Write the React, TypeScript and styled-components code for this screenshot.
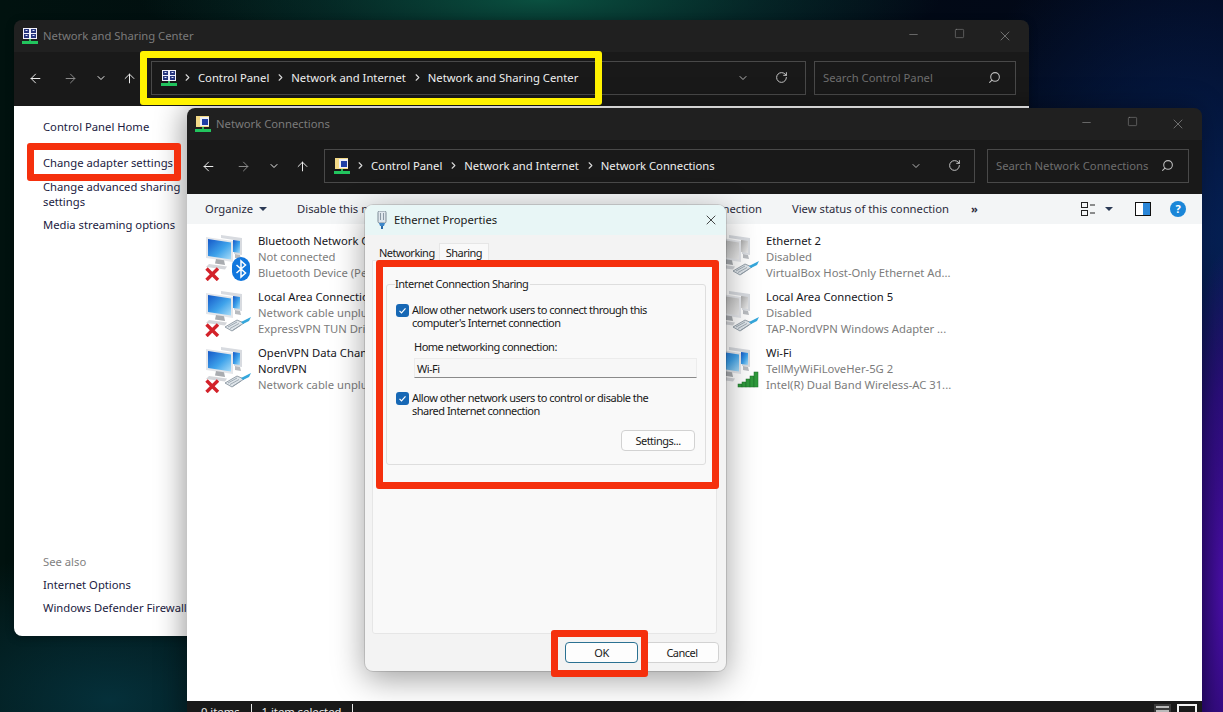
import { ArrowLeft, ArrowRight, ArrowUp, ChevronDown, ChevronRight, Minus, RotateCw, Search, Square, X } from 'lucide-react'
import styled, { createGlobalStyle } from 'styled-components'

const GlobalStyle = createGlobalStyle`
  html, body {
    margin: 0;
    height: 100%;
    overflow: hidden;
    background: #02060f;
  }
  * {
    box-sizing: border-box;
  }
`

const Desktop = styled.div`
  position: relative;
  width: 1223px;
  height: 712px;
  overflow: hidden;
  font-family: 'Noto Sans', 'Liberation Sans', sans-serif;
  font-size: 11.25px;
  background:
    radial-gradient(ellipse 50px 340px at 1225px 590px, #4a0fa8 0%, rgba(60, 10, 150, 0.65) 60%, rgba(40, 10, 120, 0) 100%),
    radial-gradient(ellipse 260px 320px at 1190px 240px, #06225a 0%, rgba(6, 30, 80, 0) 100%),
    radial-gradient(ellipse 400px 70px at 540px 0px, #0a5040 0%, rgba(8, 70, 60, 0.45) 55%, rgba(8, 60, 60, 0) 100%),
    radial-gradient(ellipse 260px 150px at 110px 700px, #05303a 0%, rgba(4, 40, 44, 0) 100%),
    linear-gradient(90deg, #01120f 0%, #020a12 50%, #02081a 100%);
`

const Window = styled.div<{ $top: number; $left: number; $height: number; $front?: boolean }>`
  position: absolute;
  top: ${(p) => p.$top}px;
  left: ${(p) => p.$left}px;
  width: 1015px;
  height: ${(p) => p.$height}px;
  display: flex;
  flex-direction: column;
  border-radius: 8px;
  overflow: hidden;
  z-index: ${(p) => (p.$front ? 2 : 1)};
  box-shadow: ${(p) => (p.$front ? '-4px 0 28px rgba(0, 0, 0, 0.38)' : '0 2px 8px rgba(0, 0, 0, 0.3)')};
`

const TitleBar = styled.div`
  flex: none;
  height: 32px;
  display: flex;
  align-items: center;
  gap: 5px;
  padding: 0 0 1px 8px;
  background: #202020;
  color: #7b7b7b;
`

const WindowControls = styled.div`
  margin-left: auto;
  display: grid;
  grid-template-columns: repeat(3, 46px);
  margin-right: 1px;
  color: #8c8c8c;
  svg {
    justify-self: center;
  }
`

const Toolbar = styled.div`
  flex: none;
  height: 54px;
  display: flex;
  padding: 9px 13px 11px 4px;
  background: #191919;
  color: #e4e4e4;
`

const Nav = styled.div`
  display: grid;
  grid-template-columns: 35px 35px 25px 33px;
  align-items: center;
  justify-items: center;
  margin-right: 5px;
`

const NavButton = styled.span<{ $dim?: boolean }>`
  display: flex;
  color: ${(p) => (p.$dim ? '#8a8a8a' : '#ececec')};
`

const AddressBar = styled.div`
  flex: 1;
  display: flex;
  align-items: center;
  padding: 0 0 1px 9px;
  border: 1px solid #494949;
  background: #191919;
  color: #f0f0f0;
  > svg:first-child {
    margin-right: -1px;
  }
`

const Crumb = styled.span`
  display: flex;
  align-items: center;
  white-space: nowrap;
  svg {
    margin: 0 5px 0 6px;
    color: #d8d8d8;
  }
`

const AddressTools = styled.div<{ $inset: number }>`
  margin-left: auto;
  display: flex;
  align-items: center;
  gap: 26px;
  padding-right: ${(p) => p.$inset}px;
  color: #c6c6c6;
`

const SearchBox = styled.div<{ $gap: number }>`
  flex: none;
  width: 202px;
  margin-left: ${(p) => p.$gap}px;
  display: flex;
  align-items: center;
  justify-content: space-between;
  padding: 0 14px 1px 8px;
  border: 1px solid #494949;
  color: #6e6e6e;
  white-space: nowrap;
  svg {
    transform: scaleX(-1);
    color: #bdbdbd;
  }
`

const SideBody = styled.div`
  flex: 1;
  display: flex;
  flex-direction: column;
  padding: 13px 0 21px 29px;
  background: #fff;
`

const SideLink = styled.a<{ $mt?: number }>`
  display: block;
  width: 146px;
  margin-top: ${(p) => p.$mt ?? 0}px;
  line-height: 15px;
  color: #1b1b3f;
`

const NoWrapLink = styled(SideLink)`
  white-space: nowrap;
`

const SeeAlso = styled.div`
  margin-top: auto;
  line-height: 15px;
  color: #7f7f7f;
`

const CommandBar = styled.div`
  flex: none;
  height: 30px;
  display: flex;
  align-items: center;
  gap: 30px;
  padding: 0 16px 1px 18px;
  background: #f3f5f6;
  color: #2b2b3c;
  white-space: nowrap;
`

const Caret = styled.span`
  display: inline-block;
  margin-left: 6px;
  vertical-align: 2px;
  border-left: 4px solid transparent;
  border-right: 4px solid transparent;
  border-top: 4px solid #2b3a55;
`

const IconCaret = styled(Caret)`
  margin: 0 12px 0 0;
`

const More = styled.span`
  font-weight: 700;
  margin-left: -8px;
`

const CommandIcons = styled.div`
  margin-left: auto;
  display: flex;
  align-items: center;
  gap: 10px;
`

const HelpBadge = styled.span`
  width: 16px;
  height: 16px;
  margin-left: 9px;
  border-radius: 50%;
  background: #1a86d8;
  color: #fff;
  font-size: 11px;
  font-weight: 700;
  line-height: 16px;
  text-align: center;
`

const Content = styled.div`
  flex: 1;
  display: grid;
  grid-template-columns: 508px 1fr;
  grid-auto-rows: 56px;
  align-content: start;
  padding: 9px 0 0 18px;
  background: #fff;
`

const Connection = styled.div`
  display: flex;
  gap: 5px;
  min-width: 0;
`

const Lines = styled.div`
  line-height: 16px;
  white-space: nowrap;
`

const Name = styled.div`
  color: #16161c;
`

const Detail = styled.div`
  color: #7c7c7c;
`

const StatusBar = styled.div`
  flex: none;
  height: 27px;
  display: flex;
  align-items: flex-start;
  padding: 3px 5px 0 14px;
  background: #191919;
  color: #e8e8e8;
`

const StatusText = styled.span`
  padding-right: 11px;
  margin-right: 10px;
  border-right: 1px solid #e8e8e8;
  line-height: 16px;
`

const StatusIcons = styled.div`
  margin-left: auto;
  display: flex;
  gap: 6px;
`

const Dialog = styled.div`
  position: absolute;
  top: 205px;
  left: 365px;
  width: 361px;
  height: 466px;
  display: flex;
  flex-direction: column;
  border-radius: 8px;
  overflow: hidden;
  z-index: 3;
  background: #f3f3f3;
  color: #1a1a1a;
  box-shadow: 0 0 0 1px rgba(0, 0, 0, 0.12), 0 8px 32px rgba(0, 0, 0, 0.38);
`

const DialogTitle = styled.div`
  flex: none;
  height: 30px;
  display: flex;
  align-items: center;
  gap: 6px;
  padding: 0 7px 1px 11px;
  background: #e8f6f6;
  svg:last-child {
    margin-left: auto;
  }
`

const Tabs = styled.div`
  flex: none;
  height: 25px;
  display: flex;
  align-items: flex-end;
  padding-left: 14px;
  font-size: 11px;
  letter-spacing: -0.5px;
`

const Tab = styled.span<{ $active?: boolean }>`
  height: ${(p) => (p.$active ? 17 : 15)}px;
  padding: 0 ${(p) => (p.$active ? 6 : 4)}px 0 ${(p) => (p.$active ? 6 : 0)}px;
  line-height: ${(p) => (p.$active ? 17 : 15)}px;
  background: ${(p) => (p.$active ? '#f9f9f9' : 'transparent')};
  border: ${(p) => (p.$active ? '1px solid #e6e6e6' : 'none')};
  border-bottom: none;
`

const TabPanel = styled.div`
  flex: 1;
  margin: 0 9px 0 7px;
  padding: 16px 10px 0 13px;
  background: #f9f9f9;
  border: 1px solid #e6e6e6;
  border-radius: 0 0 3px 3px;
  font-size: 11px;
  letter-spacing: -0.5px;
`

const Group = styled.fieldset`
  height: 188px;
  margin: 0;
  padding: 12px 8px 0 9px;
  border: 1px solid #dedede;
  border-radius: 3px;
`

const Legend = styled.legend`
  padding: 0 2px 0 0;
  margin-left: -1px;
  line-height: 14px;
`

const CheckRow = styled.label<{ $mt?: number }>`
  display: flex;
  gap: 3px;
  margin-top: ${(p) => p.$mt ?? 0}px;
  line-height: 13px;
`

const CheckMark = styled.span`
  flex: none;
  width: 13px;
  height: 13px;
  margin-top: 1px;
  border-radius: 3px;
  display: flex;
  align-items: center;
  justify-content: center;
  background: #1768b5;
`

const FieldLabel = styled.div`
  margin: 11px 0 4px 18px;
  line-height: 14px;
`

const Field = styled.div`
  width: 283px;
  height: 20px;
  margin-left: 18px;
  padding-left: 2px;
  line-height: 19px;
  background: #f7f7f7;
  border: 1px solid #ececec;
  border-bottom: 1px solid #8a8a8a;
`

const Button = styled.button<{ $primary?: boolean }>`
  width: ${(p) => (p.$primary ? 73 : 74)}px;
  height: 21px;
  padding: 0;
  font: inherit;
  font-size: 11px;
  letter-spacing: -0.5px;
  color: #1a1a1a;
  background: #fdfdfd;
  border: 1px solid ${(p) => (p.$primary ? '#2b7192' : '#d2d2d2')};
  border-radius: 4px;
`

const SettingsRow = styled.div`
  display: flex;
  justify-content: flex-end;
  margin-top: 13px;
  padding-right: 2px;
`

const DialogFooter = styled.div`
  flex: none;
  height: 37px;
  display: flex;
  justify-content: flex-end;
  gap: 7px;
  padding: 8px 7px 0 0;
`

const Highlight = styled.div`
  position: absolute;
  z-index: 4;
  border: 7px solid #f5300d;
  border-radius: 3px;
  pointer-events: none;
`

const AdapterHighlight = styled(Highlight)`
  top: 143px;
  left: 27px;
  width: 154px;
  height: 38px;
`

const SharingHighlight = styled(Highlight)`
  top: 260px;
  left: 376px;
  width: 343px;
  height: 229px;
`

const OkHighlight = styled(Highlight)`
  top: 630px;
  left: 551px;
  width: 97px;
  height: 47px;
`

const PathHighlight = styled(Highlight)`
  top: 51px;
  left: 140px;
  width: 462px;
  height: 54px;
  border-color: #fff200;
`

const ControlPanelIcon = () => (
  <svg width="16" height="16" viewBox="0 0 16 16">
    <rect x="1" y="0" width="14" height="11" fill="#f2f2fa" />
    <rect x="2" y="1" width="5" height="4" fill="#26357c" />
    <rect x="9" y="1" width="5" height="4" fill="#26357c" />
    <rect x="2" y="6" width="5" height="4" fill="#26357c" />
    <rect x="9" y="6" width="5" height="4" fill="#26357c" />
    <path d="M3.5 2.5h2M10.5 2.5h2M3.5 7.5h2M10.5 7.5h2" stroke="#dfe6ff" />
    <rect x="7" y="11" width="2" height="2" fill="#2fb45a" />
    <rect x="0" y="13" width="16" height="3" fill="#22c55e" />
  </svg>
)

const ConnectionsIcon = () => (
  <svg width="16" height="16" viewBox="0 0 16 16">
    <rect x="1" y="0" width="13" height="11" fill="#f2d987" />
    <rect x="5" y="1" width="9" height="9" fill="#eef0f6" />
    <rect x="7" y="3" width="6" height="6" fill="#1e3fa6" />
    <rect x="7" y="11" width="2" height="2" fill="#2fb45a" />
    <rect x="0" y="13" width="16" height="3" fill="#22c55e" />
  </svg>
)

const PlugIcon = () => (
  <svg width="12" height="18" viewBox="0 0 12 18">
    <rect x="2" y="0" width="8" height="12" rx="1.5" fill="#dfe6ec" stroke="#7d8a96" />
    <path d="M4.5 2v7M7.5 2v7" stroke="#8b98a4" />
    <path d="M3 12h6l-1 3H4z" fill="#3f88c8" />
    <rect x="5" y="15" width="2" height="3" fill="#2a6aa8" />
  </svg>
)

const Monitors = ({ grey }: { grey?: boolean }) => {
  const id = grey ? 'screenGrey' : 'screenBlue'
  return (
    <>
      <defs>
        <linearGradient id={id} x1="0" y1="0" x2="1" y2="1">
          <stop offset="0" stopColor={grey ? '#a9a9a9' : '#1558c8'} />
          <stop offset="0.55" stopColor={grey ? '#d0d0d0' : '#3ea2ea'} />
          <stop offset="1" stopColor={grey ? '#ececec' : '#a8dcf8'} />
        </linearGradient>
      </defs>
      <path d="M16 2l21 3v17l-8-1V7l-13-2z" fill="#d8dbe0" />
      <path d="M28 7l7 1v12l-7-1z" fill={`url(#${id})`} />
      <path d="M30 21l5 1 1 4-6-1z" fill="#b9bcc0" />
      <path d="M1 4l27 4v21L1 25z" fill="#e4e6ea" />
      <path d="M3 6l23 3.4v17L3 23z" fill={`url(#${id})`} />
      <path d="M11 26l8 1.2 1 4.8-10-1.4z" fill="#a9acb0" />
      <path d="M4 31l18 2.5-2 3L1 34z" fill="#d4d6da" />
    </>
  )
}

const RedCross = () => (
  <path d="M1.5 35.5L13 47M13 35.5L1.5 47" stroke="#d3222a" strokeWidth="3.4" fill="none" />
)

const Cable = () => (
  <g>
    <path d="M20 38l12-7 7 3-12 8z" fill="#dfe5ea" stroke="#7f8b97" strokeWidth="0.8" />
    <path d="M23 38l9-5M25 39.5l9-5M28 41l8-5" stroke="#8e9aa5" strokeWidth="0.8" />
    <path d="M36 33l10-5-2 4-6 3z" fill="#35a7dc" />
  </g>
)

const Bluetooth = () => (
  <g>
    <rect x="27" y="24" width="18" height="24" rx="9" fill="#1177de" />
    <path d="M31.5 32l9 8-4.5 4V28l4.5 4-9 8" stroke="#fff" strokeWidth="1.5" fill="none" />
  </g>
)

const Signal = () => (
  <g fill="#2f9a3c" stroke="#1e6e2b" strokeWidth="0.5">
    <rect x="25" y="39" width="4" height="3" />
    <rect x="29" y="37" width="4" height="5" />
    <rect x="33" y="34" width="4" height="8" />
    <rect x="37" y="31" width="4" height="11" />
    <rect x="41" y="27" width="4" height="15" />
  </g>
)

type Badge = 'bluetooth' | 'cable' | 'signal'

const AdapterIcon = ({ badge, off, disabled }: { badge: Badge; off?: boolean; disabled?: boolean }) => (
  <svg width="48" height="48" viewBox="0 0 48 48" style={{ flex: 'none' }}>
    <Monitors grey={disabled} />
    {off && <RedCross />}
    {badge === 'bluetooth' && <Bluetooth />}
    {badge === 'cable' && <Cable />}
    {badge === 'signal' && <Signal />}
  </svg>
)

const ViewIcon = () => (
  <svg width="14" height="14" viewBox="0 0 14 14" fill="none" stroke="#222">
    <rect x="0.5" y="0.5" width="6" height="5" />
    <rect x="0.5" y="8.5" width="6" height="5" />
    <path d="M9 3h5M9 11h5" />
  </svg>
)

const PaneIcon = () => (
  <svg width="16" height="14" viewBox="0 0 16 14">
    <rect x="0.5" y="0.5" width="15" height="13" fill="#fff" stroke="#111" />
    <rect x="8" y="1" width="7" height="12" fill="#2a86d8" />
  </svg>
)

const ListIcon = () => (
  <svg width="17" height="14" viewBox="0 0 17 14">
    <rect width="17" height="14" fill="#3a3a3a" />
    <path d="M2 3h13M2 7h13M2 11h13" stroke="#e4e4e4" strokeWidth="1.5" />
  </svg>
)

const TileIcon = () => (
  <svg width="20" height="14" viewBox="0 0 20 14">
    <rect x="1" y="1" width="18" height="13" fill="#191919" stroke="#f2f2f2" strokeWidth="2" />
  </svg>
)

const WindowButtons = () => (
  <WindowControls>
    <Minus size={13} strokeWidth={1.2} />
    <Square size={11} strokeWidth={1.2} />
    <X size={16} strokeWidth={1.1} />
  </WindowControls>
)

const Path = ({ icon, parts, gap, placeholder }: { icon: React.ReactNode; parts: string[]; gap: number; placeholder: string }) => (
  <Toolbar>
    <Nav>
      <NavButton><ArrowLeft size={15} strokeWidth={1.6} /></NavButton>
      <NavButton $dim><ArrowRight size={15} strokeWidth={1.6} /></NavButton>
      <NavButton><ChevronDown size={12} strokeWidth={2} /></NavButton>
      <NavButton><ArrowUp size={15} strokeWidth={1.6} /></NavButton>
    </Nav>
    <AddressBar>
      {icon}
      {parts.map((part) => (
        <Crumb key={part}>
          <ChevronRight size={11} strokeWidth={2.4} />
          <span>{part}</span>
        </Crumb>
      ))}
      <AddressTools $inset={25 - gap}>
        <ChevronDown size={12} strokeWidth={1.8} />
        <RotateCw size={13} strokeWidth={1.8} />
      </AddressTools>
    </AddressBar>
    <SearchBox $gap={gap}>
      <span>{placeholder}</span>
      <Search size={13} strokeWidth={2} />
    </SearchBox>
  </Toolbar>
)

const connections = [
  { name: ['Bluetooth Network Connection'], detail: ['Not connected', 'Bluetooth Device (Personal Area Network)'], badge: 'bluetooth', off: true },
  { name: ['Ethernet 2'], detail: ['Disabled', 'VirtualBox Host-Only Ethernet Ad...'], badge: 'cable', disabled: true },
  { name: ['Local Area Connection'], detail: ['Network cable unplugged', 'ExpressVPN TUN Driver'], badge: 'cable', off: true },
  { name: ['Local Area Connection 5'], detail: ['Disabled', 'TAP-NordVPN Windows Adapter ...'], badge: 'cable', disabled: true },
  { name: ['OpenVPN Data Channel Offload for', 'NordVPN'], detail: ['Network cable unplugged'], badge: 'cable', off: true },
  { name: ['Wi-Fi'], detail: ['TellMyWiFiLoveHer-5G 2', 'Intel(R) Dual Band Wireless-AC 31...'], badge: 'signal' },
] as { name: string[]; detail: string[]; badge: Badge; off?: boolean; disabled?: boolean }[]

const Check = () => (
  <CheckMark>
    <svg width="9" height="9" viewBox="0 0 9 9" fill="none" stroke="#fff" strokeWidth="1.2">
      <path d="M1.5 4.8l2 2 4-4.5" />
    </svg>
  </CheckMark>
)

export default function App() {
  return (
    <Desktop>
      <GlobalStyle />

      <Window $top={20} $left={14} $height={616}>
        <TitleBar>
          <ControlPanelIcon />
          <span>Network and Sharing Center</span>
          <WindowButtons />
        </TitleBar>
        <Path
          icon={<ControlPanelIcon />}
          parts={['Control Panel', 'Network and Internet', 'Network and Sharing Center']}
          gap={8}
          placeholder="Search Control Panel"
        />
        <SideBody>
          <SideLink>Control Panel Home</SideLink>
          <SideLink $mt={21}>Change adapter settings</SideLink>
          <SideLink $mt={9}>Change advanced sharing settings</SideLink>
          <SideLink $mt={8}>Media streaming options</SideLink>
          <SeeAlso>See also</SeeAlso>
          <NoWrapLink $mt={8}>Internet Options</NoWrapLink>
          <NoWrapLink $mt={8}>Windows Defender Firewall</NoWrapLink>
        </SideBody>
      </Window>

      <Window $top={108} $left={187} $height={620} $front>
        <TitleBar>
          <ConnectionsIcon />
          <span>Network Connections</span>
          <WindowButtons />
        </TitleBar>
        <Path
          icon={<ConnectionsIcon />}
          parts={['Control Panel', 'Network and Internet', 'Network Connections']}
          gap={12}
          placeholder="Search Network Connections"
        />
        <CommandBar>
          <span>Organize<Caret /></span>
          <span>Disable this network device</span>
          <span>Diagnose this connection</span>
          <span>Rename this connection</span>
          <span>View status of this connection</span>
          <More>»</More>
          <CommandIcons>
            <ViewIcon />
            <IconCaret />
            <PaneIcon />
            <HelpBadge>?</HelpBadge>
          </CommandIcons>
        </CommandBar>
        <Content>
          {connections.map((c) => (
            <Connection key={c.name[0] + c.detail[0]}>
              <AdapterIcon badge={c.badge} off={c.off} disabled={c.disabled} />
              <Lines>
                {c.name.map((line) => <Name key={line}>{line}</Name>)}
                {c.detail.map((line) => <Detail key={line}>{line}</Detail>)}
              </Lines>
            </Connection>
          ))}
        </Content>
        <StatusBar>
          <StatusText>0 items</StatusText>
          <StatusText>1 item selected</StatusText>
          <StatusIcons>
            <ListIcon />
            <TileIcon />
          </StatusIcons>
        </StatusBar>
      </Window>

      <Dialog>
        <DialogTitle>
          <PlugIcon />
          <span>Ethernet Properties</span>
          <X size={16} strokeWidth={1.2} />
        </DialogTitle>
        <Tabs>
          <Tab>Networking</Tab>
          <Tab $active>Sharing</Tab>
        </Tabs>
        <TabPanel>
          <Group>
            <Legend>Internet Connection Sharing</Legend>
            <CheckRow>
              <Check />
              <span>Allow other network users to connect through this<br />computer's Internet connection</span>
            </CheckRow>
            <FieldLabel>Home networking connection:</FieldLabel>
            <Field>Wi-Fi</Field>
            <CheckRow $mt={13}>
              <Check />
              <span>Allow other network users to control or disable the<br />shared Internet connection</span>
            </CheckRow>
            <SettingsRow>
              <Button>Settings...</Button>
            </SettingsRow>
          </Group>
        </TabPanel>
        <DialogFooter>
          <Button $primary>OK</Button>
          <Button>Cancel</Button>
        </DialogFooter>
      </Dialog>

      <PathHighlight />
      <AdapterHighlight />
      <SharingHighlight />
      <OkHighlight />
    </Desktop>
  )
}
